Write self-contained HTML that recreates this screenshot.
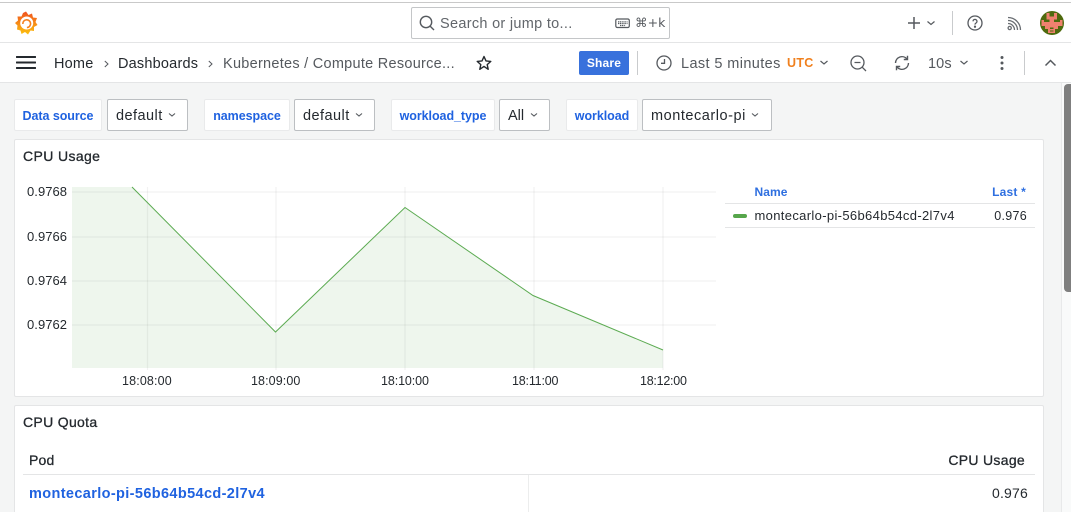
<!DOCTYPE html>
<html><head><meta charset="utf-8"><style>
html,body{margin:0;padding:0;width:1071px;height:512px;overflow:hidden;background:#f4f5f5}
body{position:relative;font-family:"Liberation Sans",sans-serif;color:#24292e;-webkit-font-smoothing:antialiased}
.a{position:absolute;box-sizing:border-box}
.t{position:absolute;white-space:nowrap;line-height:1}
.lab{position:absolute;box-sizing:border-box;background:#fff;border:1px solid #e9eaeb;border-radius:2px;top:99px;height:32px;color:#1f62e0;font-weight:700;font-size:12.5px;line-height:32px;text-align:center;white-space:nowrap;letter-spacing:-.06px}
.sel{position:absolute;box-sizing:border-box;background:#fff;border:1px solid #bcbfc2;border-radius:2px;top:99px;height:32px;font-size:14.5px;line-height:32px;padding-left:8px;white-space:nowrap;color:#24292e;letter-spacing:.45px}
svg{position:absolute;overflow:visible}
</style></head><body>
<!-- top bar -->
<div class="a" style="left:0;top:0;width:1071px;height:83px;background:#fff"></div>
<div class="a" style="left:0;top:2px;width:1071px;height:1px;background:#c9c9c9"></div>
<div class="a" style="left:0;top:42px;width:1071px;height:1px;background:#e4e5e6"></div>
<div class="a" style="left:0;top:82px;width:1071px;height:1px;background:#e4e5e6"></div>

<!-- logo -->
<svg style="left:14px;top:10px" width="24" height="26" viewBox="0 0 24 26">
<defs><linearGradient id="g" x1="0" y1="1" x2="0" y2="0"><stop offset="0" stop-color="#fcc20f"/><stop offset="1" stop-color="#f0511f"/></linearGradient></defs>
<path fill="url(#g)" d="M12 1.500L14.500 5 18 3.500 19 7.500 23 8 21.500 12 23.500 15 20 17 20 21 16.500 20.500 14 24.500 11 22 7.500 24 6.500 20.500 3 19.500 3.500 15.500 1 13 4 10.500 3.500 6.500 7.500 6.500 9 3z"/>
<circle cx="12.700" cy="13" r="6.500" fill="#fff"/>
<path fill="none" stroke="#f58220" stroke-width="1.600" d="M8.800 14a3.900 3.900 0 1 1 4.100 3.600"/>
</svg>

<!-- search -->
<div class="a" style="left:411px;top:7px;width:259px;height:32px;border:1px solid #c4c6c8;border-radius:2px;background:#fff"></div>
<svg style="left:419px;top:15px" width="16" height="16" fill="none" stroke="#55595e" stroke-width="1.400"><circle cx="7" cy="7" r="5.700"/><path d="M11.200 11.200L15 15"/></svg>
<div class="t" style="left:440px;top:17px;font-size:14.500px;color:#62666b;letter-spacing:.3px">Search or jump to...</div>
<svg style="left:615px;top:18px" width="16" height="11" fill="none" stroke="#55595e" stroke-width="1.200"><rect x=".8" y="1" width="13.500" height="8.500" rx="1.500"/><path d="M3 3.800h9.500M3 5.500h9.500M5 7.500h5.500" stroke-dasharray="1.200 .6"/></svg>
<div class="t" style="left:635px;top:16.500px;font-size:12.500px;color:#55595e;letter-spacing:.1px;font-family:'DejaVu Sans','Liberation Sans',sans-serif">⌘+k</div>

<!-- top right -->
<svg style="left:907px;top:16px" width="14" height="14" stroke="#55595e" stroke-width="1.500"><path d="M7 1v12M1 7h12"/></svg>
<svg style="left:925.500px;top:20px" width="10" height="6" fill="none" stroke="#55595e" stroke-width="1.200"><path d="M1.500 1.500L5 4.500 8.500 1.500"/></svg>
<div class="a" style="left:952px;top:11px;width:1px;height:24px;background:#c9cbcd"></div>
<svg style="left:967px;top:15px" width="16" height="16" fill="none" stroke="#55595e" stroke-width="1.300"><circle cx="8" cy="8" r="7"/><path d="M6 6.300a2 2 0 1 1 3 1.800c-.8.4-1 .9-1 1.500"/><circle cx="8" cy="11.700" r=".5" fill="#55595e"/></svg>
<svg style="left:1007px;top:16px" width="15" height="15" fill="none" stroke="#696d72" stroke-width="1.300"><circle cx="2.700" cy="12" r="1.600"/><path d="M1 7.500a6.500 6.500 0 0 1 6.500 6.500M1 4.500a9.500 9.500 0 0 1 9.500 9.500M1 1.500a12.500 12.500 0 0 1 12.500 12.500"/></svg>
<svg style="left:1040px;top:11px" width="24" height="24" viewBox="0 0 24 24">
<clipPath id="c"><circle cx="12" cy="12" r="12"/></clipPath>
<g clip-path="url(#c)"><rect width="24" height="24" fill="#4e6a0e"/>
<path fill="#f0816f" d="M6.500 2H9.500V5.500H14V2H17V8.500H14V11H20V9H22.500V15H18V18H15V22H8V18H5V15H1.500V9H4V11H9.500V8.500H6.500z"/>
<path fill="#4e6a0e" d="M10 16.500h3.500v1.500H10zM10 19.500h3.500v1H10z"/></g></svg>

<!-- nav row -->
<svg style="left:16px;top:56px" width="20" height="14" fill="#24292e"><rect width="20" height="2" y="0" rx=".5"/><rect width="20" height="2" y="5.500" rx=".5"/><rect width="20" height="2" y="11" rx=".5"/></svg>
<div class="t" style="left:54px;top:57px;font-size:14.500px;color:#24292e;letter-spacing:.2px">Home</div>
<svg style="left:103px;top:59px" width="8" height="10" fill="none" stroke="#55595e" stroke-width="1"><path d="M1.800 2L5 5 1.800 8"/></svg>
<div class="t" style="left:118px;top:57px;font-size:14.500px;color:#24292e;letter-spacing:.2px">Dashboards</div>
<svg style="left:207px;top:59px" width="8" height="10" fill="none" stroke="#55595e" stroke-width="1"><path d="M1.800 2L5 5 1.800 8"/></svg>
<div class="t" style="left:223px;top:57px;font-size:14.500px;color:#55595e;letter-spacing:.27px">Kubernetes / Compute Resource...</div>
<svg style="left:476px;top:55px" width="16" height="16" fill="none" stroke="#24292e" stroke-width="1.400" stroke-linejoin="round"><path d="M8 1.500l2 4.400 4.800.5-3.600 3.200 1 4.700L8 11.400l-4.200 2.900 1-4.700L1.200 6.400 6 5.900z"/></svg>
<div class="a" style="left:579px;top:51px;width:50px;height:24px;background:#3871dc;border-radius:2px;color:#fff;font-weight:700;font-size:12px;line-height:24px;text-align:center;letter-spacing:.2px">Share</div>
<div class="a" style="left:637px;top:51px;width:1px;height:24px;background:#c9cbcd"></div>
<svg style="left:656px;top:55px" width="16" height="16" fill="none" stroke="#55595e" stroke-width="1.300"><circle cx="8" cy="8" r="7"/><path d="M8.500 4v4.300H5"/></svg>
<div class="t" style="left:681px;top:57px;font-size:14.500px;color:#55595e;letter-spacing:.39px">Last 5 minutes</div>
<div class="t" style="left:787px;top:57px;font-size:12.500px;font-weight:700;color:#f0801e;letter-spacing:.3px">UTC</div>
<svg style="left:819px;top:60px" width="10" height="6" fill="none" stroke="#55595e" stroke-width="1.200"><path d="M1.500 1L5 4 8.500 1"/></svg>
<svg style="left:850px;top:55px" width="17" height="16" fill="none" stroke="#55595e" stroke-width="1.300"><circle cx="7.500" cy="7.500" r="6.500"/><path d="M4.500 7.500h6M12.300 12.300L16 16"/></svg>
<svg style="left:894px;top:55px" width="16" height="16" fill="none" stroke="#55595e" stroke-width="1.400"><path d="M1.500 8A6.500 6.500 0 0 1 13 4M14.500 8A6.500 6.500 0 0 1 3 12"/><path d="M13.500 .8V4.500H9.800M2.500 15.200V11.500H6.200"/></svg>
<div class="t" style="left:928px;top:57px;font-size:14.500px;color:#55595e;letter-spacing:.1px">10s</div>
<svg style="left:959px;top:60px" width="10" height="6" fill="none" stroke="#55595e" stroke-width="1.200"><path d="M1.500 1L5 4 8.500 1"/></svg>
<svg style="left:1000px;top:55px" width="4" height="16" fill="#55595e"><circle cx="2" cy="2.500" r="1.500"/><circle cx="2" cy="8" r="1.500"/><circle cx="2" cy="13.500" r="1.500"/></svg>
<div class="a" style="left:1024px;top:51px;width:1px;height:24px;background:#c9cbcd"></div>
<svg style="left:1044px;top:59px" width="13" height="8" fill="none" stroke="#55595e" stroke-width="1.500"><path d="M1.500 6.500L6.500 1.500 11.500 6.500"/></svg>

<!-- scrollbar -->
<div class="a" style="left:1061px;top:83px;width:10px;height:429px;background:#f9fafa;border-left:1px solid #e8e9ea"></div>
<div class="a" style="left:1064px;top:84px;width:7px;height:208px;background:#7f7f7f;border-radius:4px 0 0 4px"></div>

<!-- filters -->
<div class="lab" style="left:14px;width:88px">Data source</div>
<div class="sel" style="left:107px;width:81px">default</div>
<div class="lab" style="left:204px;width:86px">namespace</div>
<div class="sel" style="left:294px;width:81px">default</div>
<div class="lab" style="left:391px;width:104px">workload_type</div>
<div class="sel" style="left:499px;width:51px;letter-spacing:0">All</div>
<div class="lab" style="left:566px;width:72px">workload</div>
<div class="sel" style="left:642px;width:130px;letter-spacing:.54px">montecarlo-pi</div>
<svg style="left:167px;top:112px" width="10" height="6" fill="none" stroke="#55595e" stroke-width="1.100"><path d="M2 1.500L5 4 8 1.500"/></svg>
<svg style="left:354px;top:112px" width="10" height="6" fill="none" stroke="#55595e" stroke-width="1.100"><path d="M2 1.500L5 4 8 1.500"/></svg>
<svg style="left:529px;top:112px" width="10" height="6" fill="none" stroke="#55595e" stroke-width="1.100"><path d="M2 1.500L5 4 8 1.500"/></svg>
<svg style="left:750px;top:112px" width="10" height="6" fill="none" stroke="#55595e" stroke-width="1.100"><path d="M2 1.500L5 4 8 1.500"/></svg>

<!-- panel 1 -->
<div class="a" style="left:14px;top:139px;width:1030px;height:258px;background:#fff;border:1px solid #e4e5e6;border-radius:2px"></div>
<div class="t" style="left:23px;top:149px;font-size:14px;font-weight:400;color:#24292e;letter-spacing:.38px;-webkit-text-stroke:.3px #24292e">CPU Usage</div>

<svg style="left:0;top:0" width="1071" height="512">
<g stroke="#000" stroke-opacity=".05" stroke-width="1.300" fill="none">
<path d="M72 192H716M72 237H716M72 281H716M72 325H716"/>
<path d="M147.500 187V370M276 187V370M405 187V370M534 187V370M663 187V370"/>
</g>
<path d="M72 187H132L275.500 332 405 207.500 533 295.500 663 350V368H72z" fill="#56a64b" fill-opacity=".1"/>
<path d="M132 187L275.500 332 405 207.500 533 295.500 663 350" fill="none" stroke="#5cab52" stroke-width="1"/>
</svg>
<div class="t" style="left:27px;top:185px;font-size:13px;letter-spacing:.05px;color:#24292e">0.9768</div>
<div class="t" style="left:27px;top:230px;font-size:13px;letter-spacing:.05px;color:#24292e">0.9766</div>
<div class="t" style="left:27px;top:274px;font-size:13px;letter-spacing:.05px;color:#24292e">0.9764</div>
<div class="t" style="left:27px;top:318px;font-size:13px;letter-spacing:.05px;color:#24292e">0.9762</div>
<div class="t" style="left:122px;top:375px;font-size:12.500px;letter-spacing:.15px;color:#24292e">18:08:00</div>
<div class="t" style="left:251px;top:375px;font-size:12.500px;letter-spacing:.1px;color:#24292e">18:09:00</div>
<div class="t" style="left:381px;top:375px;font-size:12.500px;letter-spacing:-.1px;color:#24292e">18:10:00</div>
<div class="t" style="left:512px;top:375px;font-size:12.500px;letter-spacing:-.18px;color:#24292e">18:11:00</div>
<div class="t" style="left:640px;top:375px;font-size:12.500px;letter-spacing:-.25px;color:#24292e">18:12:00</div>

<!-- legend -->
<div class="t" style="left:754.500px;top:185.500px;font-size:12px;font-weight:700;color:#2e6fe0;letter-spacing:.1px">Name</div>
<div class="t" style="right:45px;top:185.500px;font-size:12px;font-weight:700;color:#2e6fe0;letter-spacing:.2px">Last *</div>
<div class="a" style="left:725px;top:203px;width:310px;height:1px;background:#e4e5e6"></div>
<div class="a" style="left:733px;top:213.500px;width:14px;height:4px;background:#56a64b;border-radius:2px"></div>
<div class="t" style="left:754.500px;top:209px;font-size:13px;color:#24292e;letter-spacing:.34px">montecarlo-pi-56b64b54cd-2l7v4</div>
<div class="t" style="right:44px;top:209.500px;font-size:12.500px;color:#24292e;letter-spacing:.3px">0.976</div>
<div class="a" style="left:725px;top:227px;width:310px;height:1px;background:#e4e5e6"></div>

<!-- panel 2 -->
<div class="a" style="left:14px;top:405px;width:1030px;height:120px;background:#fff;border:1px solid #e4e5e6;border-radius:2px"></div>
<div class="t" style="left:23px;top:415px;font-size:14px;color:#24292e;letter-spacing:.32px;-webkit-text-stroke:.3px #24292e">CPU Quota</div>
<div class="t" style="left:29px;top:453px;font-size:14px;color:#24292e;letter-spacing:.2px;-webkit-text-stroke:.3px #24292e">Pod</div>
<div class="t" style="right:46px;top:453px;font-size:14px;color:#24292e;letter-spacing:.3px;-webkit-text-stroke:.3px #24292e">CPU Usage</div>
<div class="a" style="left:23px;top:474px;width:1012px;height:1px;background:#e4e5e6"></div>
<div class="a" style="left:528px;top:475px;width:1px;height:37px;background:#eceded"></div>
<div class="t" style="left:29px;top:487px;font-size:14.500px;font-weight:700;color:#1f62e0;letter-spacing:.37px">montecarlo-pi-56b64b54cd-2l7v4</div>
<div class="t" style="right:43px;top:486px;font-size:14px;color:#24292e;letter-spacing:.2px">0.976</div>
</body></html>
